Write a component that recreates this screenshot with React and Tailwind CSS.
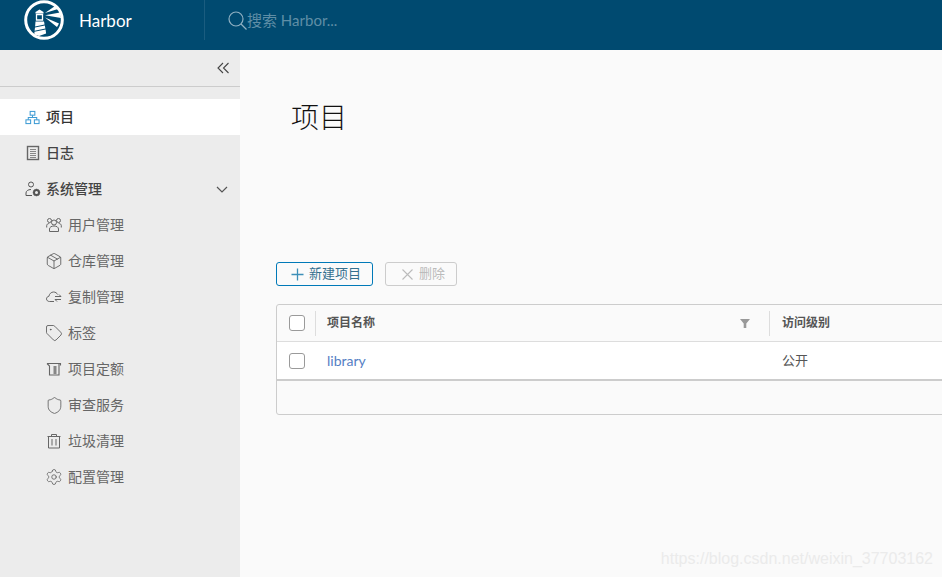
import React from "react";
import { Package, Tag, Shield, Settings } from "lucide-react";

const FONT = "font-['Lato','Noto_Sans_CJK_SC',sans-serif]";

function LogoIcon() {
  return (
    <svg viewBox="0 0 40 40" className="w-10 h-10 shrink-0">
      <circle cx="20" cy="20" r="18.3" fill="none" stroke="#fff" strokeWidth="3" />
      <path d="M15.500 9.500 L19.500 12 L19.500 13.500 L11.500 13.500 L11.500 12 Z" fill="#fff" />
      <path d="M12.500 14.500h6v5.500h-6z" fill="none" stroke="#fff" strokeWidth="1.300" />
      <path d="M11.500 21.500h8.500l0.600 3 -9.500 2z M11 27.500l9.800 -2 0.600 3 -10.800 2.200z M10.500 31.800l11.100 -2.300 0.500 4 -7 2.500 -4.800 -1.500z" fill="#fff" />
      <path d="M21 13 L31 6 L34 9 Z M21 15.300 L36 12.500 L37 18 Z M21 17.500 L35 23.500 L33 27 Z" fill="#fff" />
    </svg>
  );
}

function SearchGlyph() {
  return (
    <svg viewBox="0 0 19 19" className="w-[19px] h-[19px] shrink-0" fill="none" stroke="#8fb0c2" strokeWidth="1.200">
      <circle cx="8" cy="8" r="7" />
      <path d="M13 13l5.500 5.500" />
    </svg>
  );
}

function ProjectsIcon() {
  return (
    <svg viewBox="0 0 16 16" className="w-[15px] h-[15px]" fill="none" stroke="#3d9bd4" strokeWidth="1.100">
      <rect x="5.500" y="1.500" width="5" height="4" />
      <rect x="1" y="10.500" width="5" height="4" />
      <rect x="10" y="10.500" width="5" height="4" />
      <path d="M8 5.500v2.500M3.500 10.500V8h9v2.500" />
    </svg>
  );
}

function LogsIcon() {
  return (
    <svg viewBox="0 0 16 16" className="w-4 h-4" fill="none" stroke="#666">
      <rect x="2.500" y="1.500" width="11" height="13" strokeWidth="1.400" />
      <path d="M5 4.500h6M5 6.500h6M5 8.500h6M5 10.500h6M5 12.500h6" strokeWidth="1" stroke="#888" />
    </svg>
  );
}

function AdminIcon() {
  return (
    <svg viewBox="0 0 16 16" className="w-4 h-4" fill="none" stroke="#555" strokeWidth="1">
      <circle cx="6" cy="3.500" r="2.500" />
      <path d="M1 14.500v-2.500c0-2 2-3.500 5-3.500" />
      <path d="M1 14.500h6" />
      <circle cx="11.500" cy="11.500" r="2.500" strokeWidth="2" />
      <path d="M11.500 7.800v1M11.500 14.200v1M7.800 11.500h1M14.200 11.500h1M8.900 8.900l.7.7M13.400 13.400l.7.7M8.900 14.100l.7-.7M13.400 9.600l.7-.7" strokeWidth="1.400" />
    </svg>
  );
}

function UsersIcon() {
  return (
    <svg viewBox="0 0 16 16" className="w-4 h-4" fill="none" stroke="#666" strokeWidth="1">
      <circle cx="8" cy="5.500" r="2.500" />
      <circle cx="3.500" cy="3.500" r="2" />
      <circle cx="12.500" cy="3.500" r="2" />
      <path d="M3.500 14.500v-2.500c0-1.800 2-3 4.500-3s4.500 1.200 4.500 3v2.500z" />
      <path d="M0.700 10.500V8.500c0-1 1-2 2.600-2M15.300 10.500V8.500c0-1-1-2-2.600-2" />
    </svg>
  );
}

function ReplicationIcon() {
  return (
    <svg viewBox="0 0 16 16" className="w-4 h-4" fill="none" stroke="#666" strokeWidth="1">
      <path d="M8 12.500H3.500C1.800 12.500 0.500 11.400 0.500 9.900c0-1.400 1-2.400 2.400-2.600C3.300 4.900 5.100 3 7.600 3c1.800 0 3.300 1 4 2.500" />
      <path d="M9 7.500h6M13 5.500l2 2M9 10.500h6M11 12.500l-2-2" />
    </svg>
  );
}

function QuotaIcon() {
  return (
    <svg viewBox="0 0 16 16" className="w-4 h-4" fill="none" stroke="#666" strokeWidth="1.100">
      <path d="M1 2.500h13.500v2M1 2.500l2.500 2.500v9h9.500V2.500" />
      <path d="M7.500 6h3M7.500 8h3M7.500 10h3M7.500 12h3" strokeWidth="1.300" />
    </svg>
  );
}

function TrashIcon() {
  return (
    <svg viewBox="0 0 16 16" className="w-4 h-4" fill="none" stroke="#666" strokeWidth="1">
      <path d="M1.500 3.500h13M5.500 3.500v-2h5v2M2.500 3.500v11.500h11V3.500M6 6v6.500M10 6v6.500" />
    </svg>
  );
}

const subItems = [
  { label: "用户管理", icon: <UsersIcon /> },
  { label: "仓库管理", icon: <span className="block w-4 h-4 flex items-center justify-center"><Package size={18} strokeWidth={1.100} color="#555" className="shrink-0" /></span> },
  { label: "复制管理", icon: <ReplicationIcon /> },
  { label: "标签", icon: <span className="block w-4 h-4 flex items-center justify-center"><Tag size={18} strokeWidth={1.100} color="#555" className="shrink-0" /></span> },
  { label: "项目定额", icon: <QuotaIcon /> },
  { label: "审查服务", icon: <span className="block w-4 h-4 flex items-center justify-center"><Shield size={19} strokeWidth={1} color="#555" className="shrink-0" /></span> },
  { label: "垃圾清理", icon: <TrashIcon /> },
  { label: "配置管理", icon: <span className="block w-4 h-4 flex items-center justify-center"><Settings size={18} strokeWidth={1} color="#555" className="shrink-0" /></span> },
];

function Header() {
  return (
    <header className="h-[50px] bg-[#004a70] flex items-center shrink-0">
      <div className="w-[205px] h-10 mb-2.5 pl-6 flex items-center border-r border-[#1a5c7f]">
        <LogoIcon />
        <span className="ml-[15px] text-white text-[17px] leading-none">Harbor</span>
      </div>
      <div className="flex items-center ml-[23px] mb-[10px] text-[#5f8ea6]">
        <SearchGlyph />
        <span className="text-[15px] leading-none">搜索 Harbor...</span>
      </div>
    </header>
  );
}

function Sidebar() {
  return (
    <aside className="w-[240px] shrink-0 bg-[#ececec]">
      <div className="h-[37px] border-b border-[#ccc] flex items-center justify-end pr-[11px]">
        <svg viewBox="0 0 12 12" className="w-3 h-3" fill="none" stroke="#444" strokeWidth="1.100">
          <path d="M6 1L1 6l5 5M11.500 1L6.500 6l5 5" />
        </svg>
      </div>
      <nav className="mt-3">
        <div className="h-9 bg-white pl-[25px] flex items-center gap-[6px] text-sm text-[#333] font-medium">
          <ProjectsIcon />
          项目
        </div>
        <div className="h-9 pl-[25px] flex items-center gap-[5px] text-sm text-[#444] font-medium">
          <LogsIcon />
          日志
        </div>
        <div className="h-9 pl-[25px] pr-[12px] flex items-center gap-[5px] text-sm text-[#444] font-medium">
          <AdminIcon />
          <span className="flex-1">系统管理</span>
          <svg viewBox="0 0 12 7" className="w-3 h-[7px]" fill="none" stroke="#555" strokeWidth="1.200">
            <path d="M1 1l5 5 5-5" />
          </svg>
        </div>
        {subItems.map((item) => (
          <div key={item.label} className="h-9 pl-[46px] flex items-center gap-[6px] text-sm text-[#666]">
            {item.icon}
            {item.label}
          </div>
        ))}
      </nav>
    </aside>
  );
}

function Checkbox() {
  return <span className="block w-4 h-4 rounded-[3px] border border-[#9a9a9a] bg-white" />;
}

function ProjectTable() {
  return (
    <div className="mt-[18px] w-[800px] border border-[#ccc] rounded-[3px] text-xs">
      <div className="h-[37px] flex items-center border-b border-[#ddd] text-[#555] font-semibold">
        <div className="w-[39px] h-[25px] flex items-center pl-3 border-r border-[#ddd]">
          <Checkbox />
        </div>
        <div className="w-[454px] h-[25px] pl-[11px] pr-[19px] flex items-center justify-between border-r border-[#ddd]">
          <span>项目名称</span>
          <svg viewBox="0 0 10 10" className="w-[10px] h-[10px]">
            <path d="M0 1h10L6.300 5.500V10H3.700V5.500Z" fill="#999" />
          </svg>
        </div>
        <div className="pl-3">访问级别</div>
      </div>
      <div className="h-[37px] bg-white flex items-center">
        <div className="w-[39px] pl-3">
          <Checkbox />
        </div>
        <div className="w-[454px] pl-[11px] text-[#5580c4] text-sm">library</div>
        <div className="pl-3 text-[#555] text-[13px]">公开</div>
      </div>
      <div className="h-[35px] border-t-2 border-[#ccc]" />
    </div>
  );
}

export default function App() {
  return (
    <div className={`${FONT} relative w-[942px] h-[577px] overflow-hidden flex flex-col bg-[#fafafa]`}>
      <Header />
      <div className="flex flex-1 min-h-0">
        <Sidebar />
        <main className="flex-1 pl-9 min-w-0">
          <h1 className="mt-[47px] ml-[15px] h-10 text-[28px] font-light leading-10 text-[#111]">项目</h1>
          <div className="mt-[125px] flex gap-3 text-[13px]">
            <button className="w-[97px] h-6 border border-[#0079b8] rounded-[3px] flex items-center pl-[14px] gap-[5px] text-[#34708f]">
              <svg viewBox="0 0 13 13" className="w-[13px] h-[13px]" fill="none" stroke="#3d8fb8" strokeWidth="1.300">
                <path d="M6.500 0.500v12M0.500 6.500h12" />
              </svg>
              新建项目
            </button>
            <button className="w-[72px] h-6 border border-[#ccc] rounded-[3px] flex items-center pl-4 gap-[6px] text-[#bbb]">
              <svg viewBox="0 0 11 11" className="w-[11px] h-[11px]" fill="none" stroke="#bbb" strokeWidth="1.100">
                <path d="M0.500 0.500l10 10M10.500 0.500l-10 10" />
              </svg>
              删除
            </button>
          </div>
          <ProjectTable />
        </main>
      </div>
      <div className="absolute right-[9px] bottom-[8px] text-base leading-5 text-[#ebebeb] font-['Liberation_Sans',sans-serif]">
        https://blog.csdn.net/weixin_37703162
      </div>
    </div>
  );
}
